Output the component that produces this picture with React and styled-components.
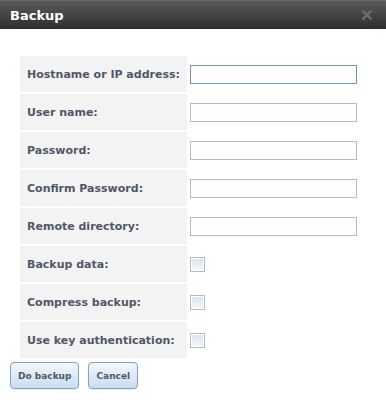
import React from "react";
import styled, { createGlobalStyle } from "styled-components";

const GlobalStyle = createGlobalStyle`
  html, body {
    margin: 0;
    padding: 0;
    background: #ffffff;
  }
  body {
    font-family: "DejaVu Sans", Verdana, sans-serif;
  }
`;

const Dialog = styled.div`
  width: 386px;
  height: 400px;
  background: #ffffff;
  display: flex;
  flex-direction: column;
`;

const TitleBar = styled.div`
  height: 29px;
  box-sizing: border-box;
  border-top: 1px solid #6a6a6a;
  background: linear-gradient(#5a5a5a, #2e2e2e);
  display: flex;
  align-items: center;
  justify-content: space-between;
  padding: 0 14px 0 10px;
`;

const Title = styled.span`
  color: #ffffff;
  font-weight: bold;
  font-size: 13px;
  font-family: "DejaVu Sans", sans-serif;
`;

const CloseIcon = styled.svg`
  width: 10px;
  height: 10px;
`;

const Form = styled.form`
  display: grid;
  grid-template-columns: 167px 167px;
  column-gap: 3px;
  row-gap: 2px;
  padding: 27px 0 0 20px;
`;

const Label = styled.label`
  height: 36px;
  background: #f3f3f3;
  display: flex;
  align-items: center;
  padding-left: 7px;
  font-size: 11px;
  font-weight: bold;
  color: #4f5868;
  white-space: nowrap;
`;

const Cell = styled.div`
  height: 36px;
  display: flex;
  align-items: center;
`;

const TextInput = styled.input`
  width: 167px;
  height: 19px;
  box-sizing: border-box;
  border: 1px solid #b6bac5;
  padding: 0 3px;
  outline: none;
  font-size: 11px;
  background: #fffdfd;
  &:focus {
    border-color: #7397b9;
  }
`;

const Check = styled.input`
  appearance: none;
  margin: 0;
  width: 15px;
  height: 15px;
  box-sizing: border-box;
  border: 1px solid #b6bac5;
  background: linear-gradient(#d6e4f0, #f4f8fb);
  box-shadow: inset 0 0 0 1px #ffffff;
`;

const Buttons = styled.div`
  display: flex;
  gap: 9px;
  padding: 4px 0 0 10px;
`;

const Button = styled.button`
  height: 27px;
  padding: 0 7px;
  border: 1px solid #7ca4c6;
  border-radius: 4px;
  background: linear-gradient(#f2f7fc, #c9ddef);
  color: #4f5868;
  font-family: "DejaVu Sans", sans-serif;
  font-weight: bold;
  font-size: 9px;
  box-shadow: 0 1px 1px rgba(0, 0, 0, 0.08);
`;

const fields = [
  { label: "Hostname or IP address:", type: "text", focus: true },
  { label: "User name:", type: "text" },
  { label: "Password:", type: "password" },
  { label: "Confirm Password:", type: "password" },
  { label: "Remote directory:", type: "text" },
  { label: "Backup data:", type: "checkbox" },
  { label: "Compress backup:", type: "checkbox" },
  { label: "Use key authentication:", type: "checkbox" },
];

export default function App() {
  return (
    <>
      <GlobalStyle />
      <Dialog>
        <TitleBar>
          <Title>Backup</Title>
          <CloseIcon viewBox="0 0 10 10">
            <path
              d="M1.5 1.5 L8.5 8.5 M8.5 1.5 L1.5 8.5"
              stroke="#5f7288"
              strokeWidth="2.4"
              strokeLinecap="square"
            />
          </CloseIcon>
        </TitleBar>
        <Form onSubmit={(e) => e.preventDefault()}>
          {fields.map((f) => (
            <React.Fragment key={f.label}>
              <Label>{f.label}</Label>
              <Cell>
                {f.type === "checkbox" ? (
                  <Check type="checkbox" />
                ) : (
                  <TextInput type={f.type} autoFocus={f.focus} />
                )}
              </Cell>
            </React.Fragment>
          ))}
        </Form>
        <Buttons>
          <Button>Do backup</Button>
          <Button>Cancel</Button>
        </Buttons>
      </Dialog>
    </>
  );
}
